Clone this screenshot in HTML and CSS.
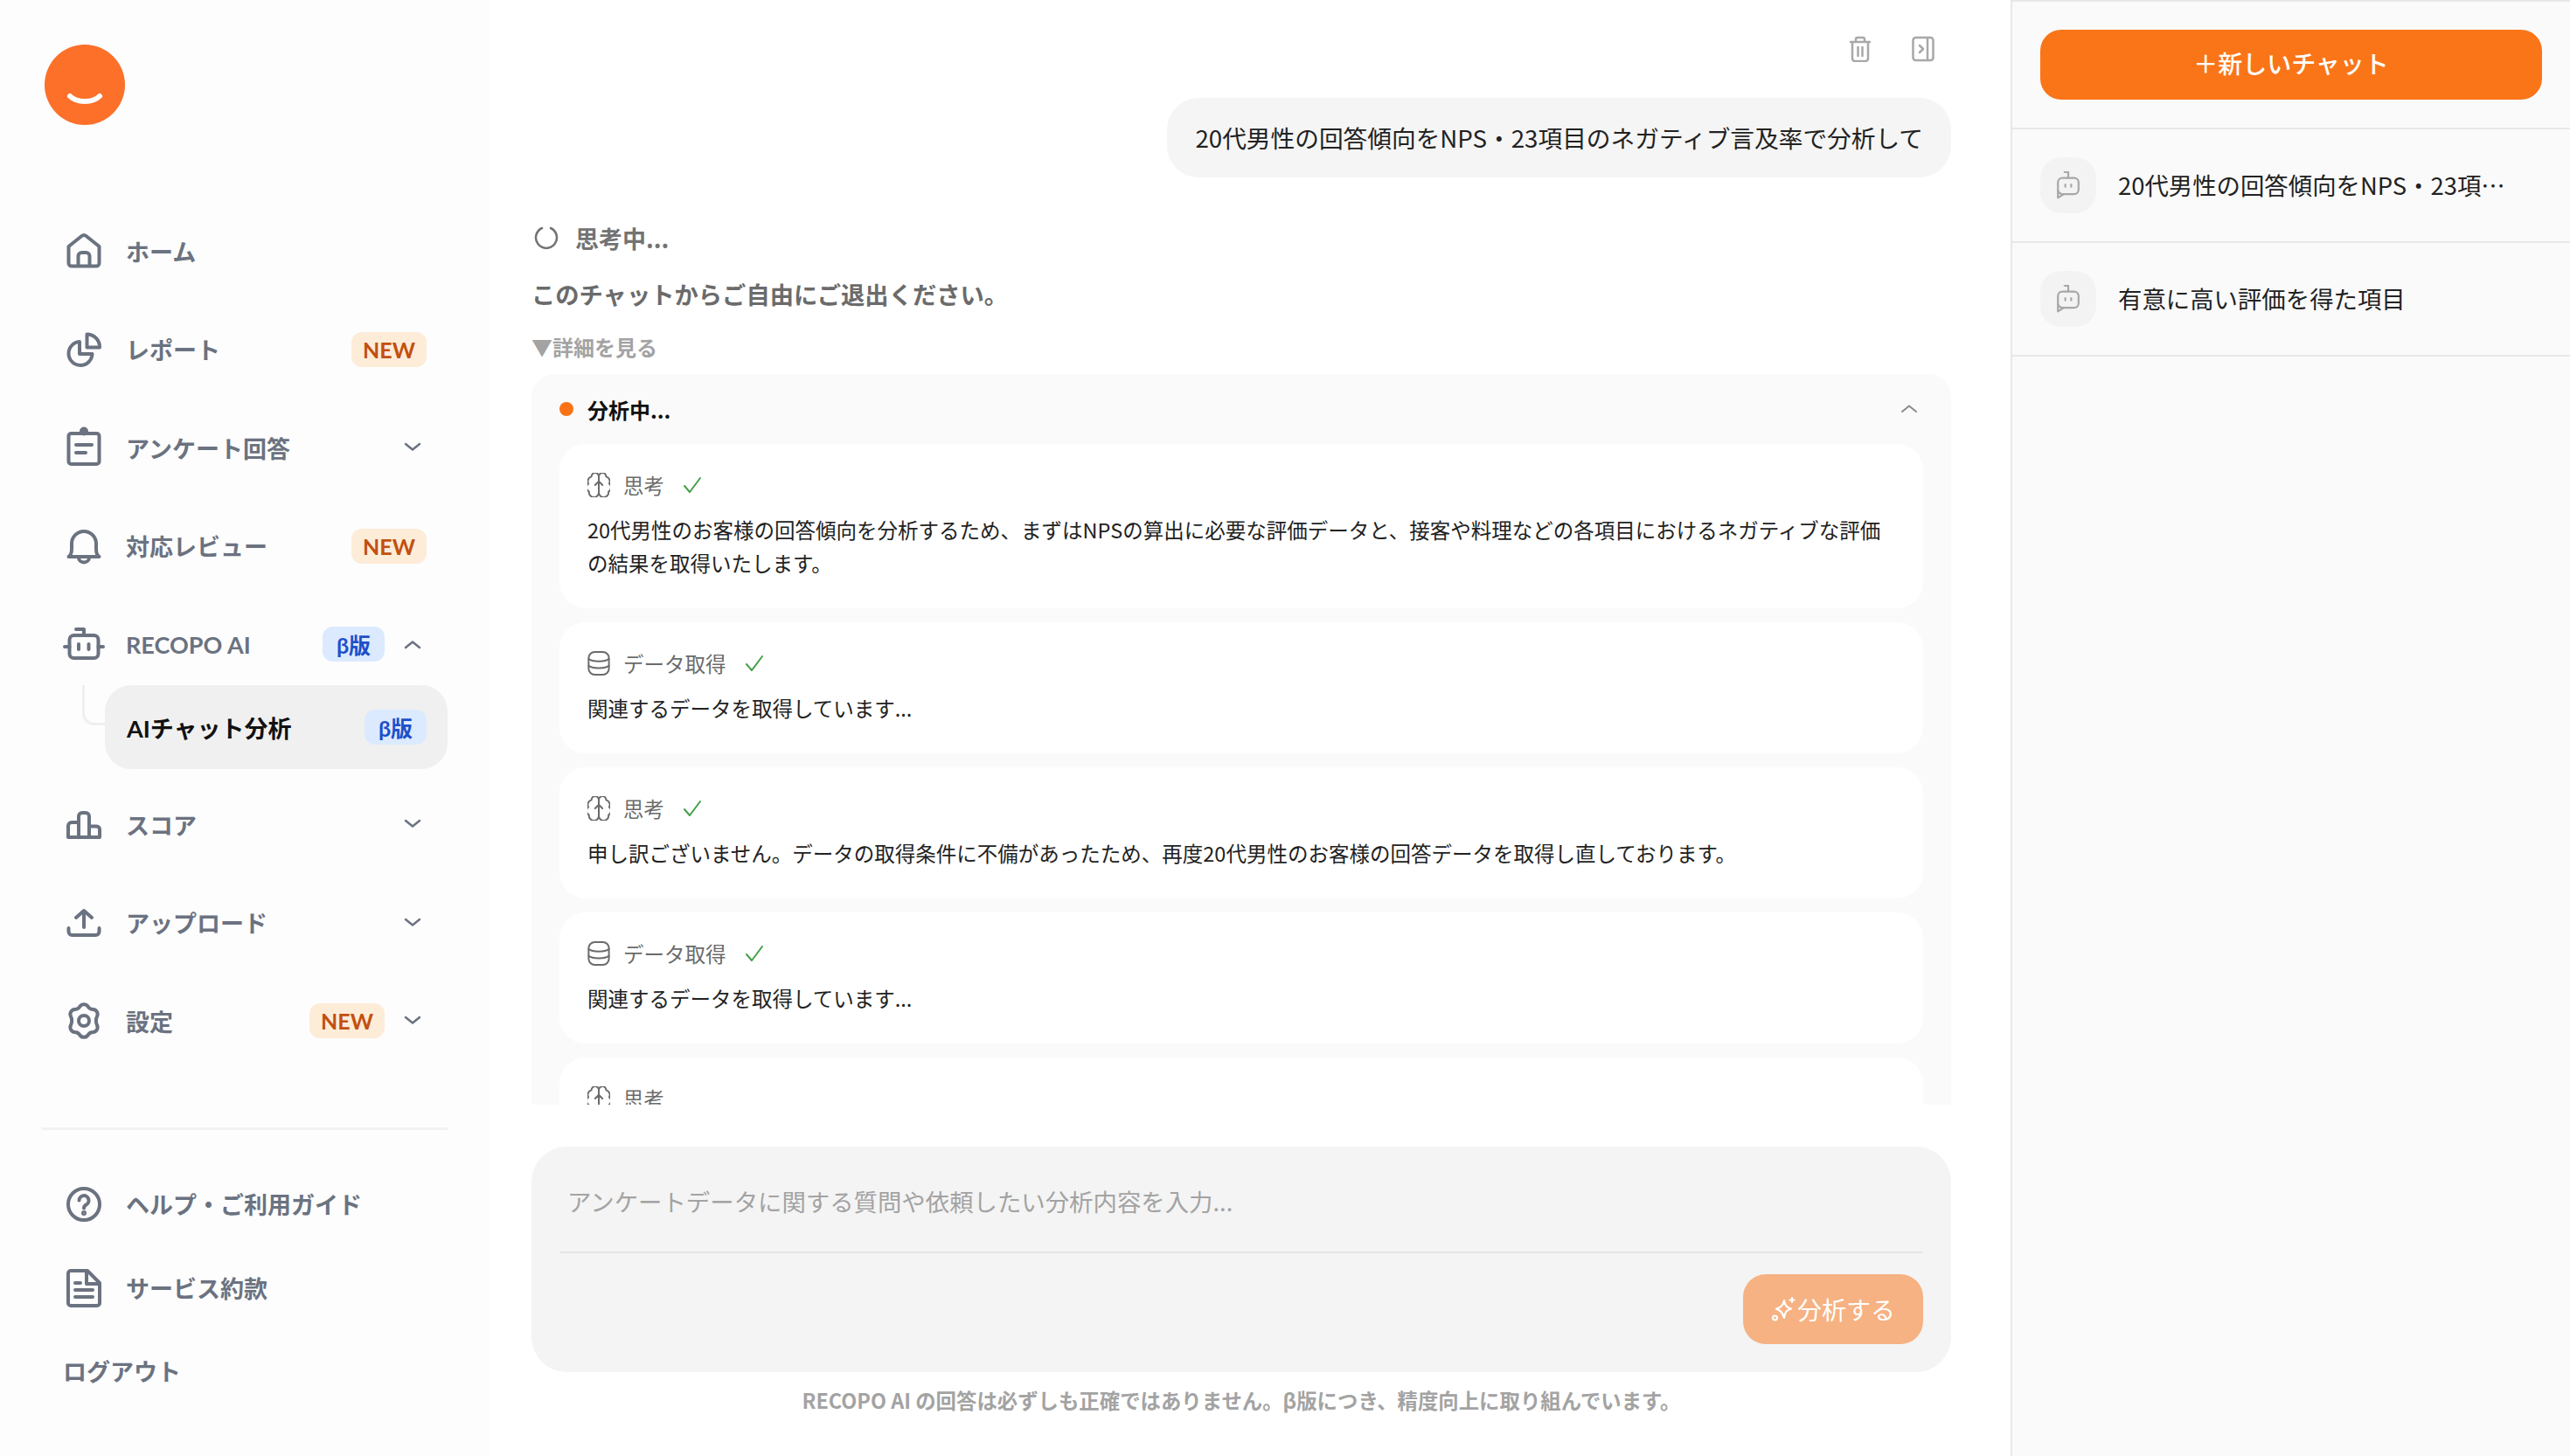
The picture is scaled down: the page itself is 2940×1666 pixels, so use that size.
FILE: index.html
```html
<!DOCTYPE html>
<html lang="ja">
<head>
	<meta charset="utf-8">
	<title>RECOPO AI</title>
	<link rel="stylesheet" href="styles.css">
</head>
<body>
<svg class="defs" width="0" height="0">
	<symbol id="brain" viewBox="3 2 18 20"><path d="M12 5a3 3 0 1 0-5.997.125 4 4 0 0 0-2.526 5.77 4 4 0 0 0 .556 6.588A4 4 0 1 0 12 18Z"/><path d="M12 5a3 3 0 1 1 5.997.125 4 4 0 0 1 2.526 5.77 4 4 0 0 1-.556 6.588A4 4 0 1 1 12 18Z"/><path d="M12 9v11M9 12l3-3 3 3"/></symbol>
	<symbol id="db" viewBox="3 2 18 20"><rect x="3.700" y="2.700" width="16.600" height="18.600" rx="5"/><path d="M3.700 8.500c3 2.500 13.600 2.500 16.600 0M3.700 14c3 2.500 13.600 2.500 16.600 0"/></symbol>
	<symbol id="check" viewBox="0 0 24 24"><path d="M3 13l6 7L21 4"/></symbol>
	<symbol id="chev" viewBox="0 0 20 20"><path d="M2 6l8 6.500 8-6.500"/></symbol>
	<symbol id="bot" viewBox="4 3 16 19"><path d="M12 7.500V3.500H9.500"/><rect x="5" y="7.500" width="14" height="11" rx="3"/><path d="M10 12v1.500M14 12v1.500M5 16v5l4-2.500"/></symbol>
</svg>

<div class="app">
	<aside class="side">
		<svg class="logo" viewBox="0 0 92 92"><circle cx="46" cy="46" r="46" fill="#fc7029"/><path d="M29 59c8 8 26 8 34 0" fill="none" stroke="#fff" stroke-width="6" stroke-linecap="round"/></svg>

		<nav class="nav">
			<a class="item">
				<svg class="ic" viewBox="0 0 40 40"><path d="M2.500 15L17.500 3q2.500-2 5 0l15 12v19a3.500 3.500 0 0 1-3.500 3.500H6A3.500 3.500 0 0 1 2.500 34zM13.500 37.500V26a4 4 0 0 1 4-4h5a4 4 0 0 1 4 4v11.500"/></svg>
				<span class="lbl">ホーム</span>
			</a>
			<a class="item">
				<svg class="ic" viewBox="0 0 40 40"><path d="M15 11a13.500 13.500 0 1 0 14.500 14H15z"/><path d="M23.500 2.500a14.500 14.500 0 0 1 14.500 15H23.500z"/></svg>
				<span class="lbl">レポート</span>
				<span class="tag new">NEW</span>
			</a>
			<a class="item">
				<svg class="ic" viewBox="0 0 40 40"><rect x="2.500" y="4" width="35" height="35" rx="3"/><path d="M11 17h18M11 26h11"/><circle cx="20" cy="1.500" r="3" fill="#6b7280"/></svg>
				<span class="lbl">アンケート回答</span>
				<svg class="chev"><use href="#chev"/></svg>
			</a>
			<a class="item">
				<svg class="ic" viewBox="0 0 40 40"><path d="M2.500 32c3-2 3.500-5 3.500-9v-6a14 14 0 0 1 28 0v6c0 4 .5 7 3.500 9zM14 33a6 5.500 0 0 0 12 0"/></svg>
				<span class="lbl">対応レビュー</span>
				<span class="tag new">NEW</span>
			</a>
			<a class="item">
				<svg class="ic" viewBox="0 0 40 40"><rect x="3.500" y="10" width="33" height="26" rx="5"/><path d="M20 10V3h-9M-2 23h5.500M36.500 23H42M14 20v6M25.500 20v6"/></svg>
				<span class="lbl">RECOPO AI</span>
				<span class="tag beta">β版</span>
				<svg class="chev up"><use href="#chev"/></svg>
			</a>
			<div class="sub-row">
				<span class="elbow"></span>
				<a class="sub">
					<span class="lbl">AIチャット分析</span>
					<span class="tag beta">β版</span>
				</a>
			</div>
			<a class="item">
				<svg class="ic" viewBox="0 0 40 40"><path d="M14 35V11a4 4 0 0 1 4-4h4a4 4 0 0 1 4 4v24M14 18H6a4 4 0 0 0-4 4v13h36v-9a3.500 3.500 0 0 0-3.500-3.500H26"/></svg>
				<span class="lbl">スコア</span>
				<svg class="chev"><use href="#chev"/></svg>
			</a>
			<a class="item">
				<svg class="ic" viewBox="0 0 40 40"><path d="M2.500 26v4a4 4 0 0 0 4 4h27a4 4 0 0 0 4-4v-4M20 25V7M11 14l9-8 9 8"/></svg>
				<span class="lbl">アップロード</span>
				<svg class="chev"><use href="#chev"/></svg>
			</a>
			<a class="item">
				<svg class="ic gear" viewBox="0 0 40 44"><path d="M15.500 5.500a5.500 5.500 0 0 1 9 0c1.500 2.500 3 3.500 6 3.500a5.500 5.500 0 0 1 4.500 8c-1.500 2.500-1.500 7.500 0 10a5.500 5.500 0 0 1-4.500 8c-3 0-4.500 1-6 3.500a5.500 5.500 0 0 1-9 0c-1.500-2.500-3-3.500-6-3.500a5.500 5.500 0 0 1-4.500-8c1.500-2.500 1.500-7.500 0-10a5.500 5.500 0 0 1 4.500-8c3 0 4.500-1 6-3.500z"/><circle cx="20" cy="22" r="6"/></svg>
				<span class="lbl">設定</span>
				<span class="tag new">NEW</span>
				<svg class="chev"><use href="#chev"/></svg>
			</a>
		</nav>

		<div class="rule"></div>

		<nav class="nav2">
			<a class="item">
				<svg class="ic" viewBox="0 0 40 40"><circle cx="20" cy="20" r="18"/><path d="M14.500 15.500a5.500 5.500 0 1 1 8 5c-1.500 1-2.500 2-2.500 4"/><circle cx="20" cy="30" r="1" fill="#6b7280"/></svg>
				<span class="lbl">ヘルプ・ご利用ガイド</span>
			</a>
			<a class="item">
				<svg class="ic" viewBox="0 0 40 40"><path d="M5 0h19l14 14v23a3 3 0 0 1-3 3H5a3 3 0 0 1-3-3V3a3 3 0 0 1 3-3zM23 0v15h15M10 14h6M10 22h20M10 30h20"/></svg>
				<span class="lbl">サービス約款</span>
			</a>
			<a class="logout">ログアウト</a>
		</nav>
	</aside>

	<main class="main">
		<div class="tools">
			<svg class="tool" viewBox="0 0 26 30"><path d="M2 7h22M8 7V4a2 2 0 0 1 2-2h6a2 2 0 0 1 2 2v3M4 7v19a3 3 0 0 0 3 3h12a3 3 0 0 0 3-3V7M10.500 13v10M15.500 13v10"/></svg>
			<svg class="tool" viewBox="0 0 26 30"><rect x="1.500" y="2" width="23" height="26" rx="3"/><path d="M18 2v26M9 11l4 4-4 4"/></svg>
		</div>
		<div class="bubble">20代男性の回答傾向をNPS・23項目のネガティブ言及率で分析して</div>

		<div class="thinking">
			<svg class="spin" viewBox="0 0 28 28"><path d="M9 3a12 12 0 1 0 10 0"/></svg>
			<span>思考中...</span>
		</div>
		<p class="leave">このチャットからご自由にご退出ください。</p>
		<p class="more">▼詳細を見る</p>

		<section class="log">
			<header class="log-head">
				<span class="dot"></span>
				<span class="log-title">分析中...</span>
				<svg class="log-chev"><use href="#chev"/></svg>
			</header>
			<div class="card">
				<div class="card-head"><svg class="card-ic"><use href="#brain"/></svg><span>思考</span><svg class="ok"><use href="#check"/></svg></div>
				<p>20代男性のお客様の回答傾向を分析するため、まずはNPSの算出に必要な評価データと、接客や料理などの各項目におけるネガティブな評価の結果を取得いたします。</p>
			</div>
			<div class="card">
				<div class="card-head"><svg class="card-ic"><use href="#db"/></svg><span>データ取得</span><svg class="ok"><use href="#check"/></svg></div>
				<p>関連するデータを取得しています...</p>
			</div>
			<div class="card">
				<div class="card-head"><svg class="card-ic"><use href="#brain"/></svg><span>思考</span><svg class="ok"><use href="#check"/></svg></div>
				<p>申し訳ございません。データの取得条件に不備があったため、再度20代男性のお客様の回答データを取得し直しております。</p>
			</div>
			<div class="card">
				<div class="card-head"><svg class="card-ic"><use href="#db"/></svg><span>データ取得</span><svg class="ok"><use href="#check"/></svg></div>
				<p>関連するデータを取得しています...</p>
			</div>
			<div class="card">
				<div class="card-head"><svg class="card-ic"><use href="#brain"/></svg><span>思考</span></div>
			</div>
		</section>

		<div class="composer">
			<div class="ph">アンケートデータに関する質問や依頼したい分析内容を入力...</div>
			<div class="composer-foot">
				<button class="send">
					<svg viewBox="0 0 30 30"><path d="M15 5c1 6 3 8 8 9.500-5 1.500-7 3.500-8 10.500-1-3-2-6-4-7.500-1-1-3-2-5-3 5-1.500 8-3.500 9-9.500z"/><path d="M24 2v5M21.500 4.500h5"/><circle cx="4.500" cy="25" r="2.500"/></svg>
					分析する
				</button>
			</div>
		</div>
		<p class="note">RECOPO AI の回答は必ずしも正確ではありません。β版につき、精度向上に取り組んでいます。</p>
	</main>

	<aside class="hist">
		<div class="hist-top"><button class="newchat">＋新しいチャット</button></div>
		<a class="hist-row">
			<span class="ava"><svg><use href="#bot"/></svg></span>
			<span class="hist-txt">20代男性の回答傾向をNPS・23項…</span>
		</a>
		<a class="hist-row">
			<span class="ava"><svg><use href="#bot"/></svg></span>
			<span class="hist-txt">有意に高い評価を得た項目</span>
		</a>
	</aside>
</div>
</body>
</html>
```

FILE: styles.css
```css
* {
	box-sizing: border-box;
}
html, body {
	margin: 0;
	height: 100%;
	background: #fff;
}
body {
	font-family: "Noto Sans CJK JP", "Noto Sans", sans-serif;
	color: #222;
}
p {
	margin: 0;
}
.defs {
	position: absolute;
}
.app {
	display: flex;
	width: 2940px;
	height: 1666px;
	overflow: hidden;
}

/* left menu */
.side {
	width: 560px;
	flex: none;
	background: #fdfdfd;
	padding: 51px 48px 0;
	font-family: "Lato", "Noto Sans CJK JP", sans-serif;
}
.logo {
	display: block;
	width: 92px;
	height: 92px;
	margin-left: 3px;
}
.nav {
	margin-top: 112px;
	display: flex;
	flex-direction: column;
}
.item {
	display: flex;
	align-items: center;
	height: 64px;
	padding: 0 30px 0 28px;
	margin-bottom: 48.5px;
	color: #6b7280;
}
.ic {
	width: 40px;
	height: 40px;
	flex: none;
	margin-right: 28px;
	overflow: visible;
	fill: none;
	stroke: #6b7280;
	stroke-width: 4;
	stroke-linejoin: round;
	stroke-linecap: round;
}
.gear {
	height: 44px;
}
.lbl {
	font-size: 27px;
	font-weight: 700;
	flex: 1;
	white-space: nowrap;
}
.chev {
	width: 20px;
	height: 20px;
	flex: none;
	fill: none;
	stroke: #6b7280;
	stroke-width: 2.5;
	stroke-linecap: round;
	stroke-linejoin: round;
}
.chev.up {
	transform: scaleY(-1);
}
.tag {
	flex: none;
	display: flex;
	align-items: center;
	justify-content: center;
	height: 40px;
	border-radius: 12px;
	font-size: 25px;
	font-weight: 700;
}
.new {
	width: 86px;
	background: #fdecd8;
	color: #c2500f;
}
.beta {
	width: 71px;
	background: #dbeafe;
	color: #1f4fc9;
}
.tag + .chev {
	margin-left: 22px;
}
.item > .tag:last-child {
	margin-right: -6px;
}
.sub-row {
	display: flex;
	margin-top: -33.5px;
	margin-bottom: 31px;
	height: 96px;
}
.elbow {
	width: 26px;
	height: 46px;
	margin-left: 46px;
	flex: none;
	border-left: 3px solid #efefef;
	border-bottom: 3px solid #efefef;
	border-bottom-left-radius: 14px;
}
.sub {
	flex: 1;
	display: flex;
	align-items: center;
	background: #f0f0f0;
	border-radius: 30px;
	padding: 0 24px 0 25px;
	color: #111;
}
.rule {
	height: 3px;
	background: #f2f2f2;
	margin-top: 41px;
}
.nav2 {
	margin-top: 53px;
}
.nav2 .item {
	margin-bottom: 32px;
}
.logout {
	display: block;
	margin-left: 24px;
	font-size: 27px;
	font-weight: 700;
	color: #6b7280;
	line-height: 64px;
}

/* chat column */
.main {
	width: 1740px;
	flex: none;
	padding: 0 68px 0 48px;
}
.tools {
	display: flex;
	justify-content: flex-end;
	gap: 46px;
	height: 112px;
	padding: 41px 19px 0 0;
}
.tool {
	width: 26px;
	height: 30px;
	fill: none;
	stroke: #a8a8a8;
	stroke-width: 2.5;
	stroke-linecap: round;
	stroke-linejoin: round;
}
.bubble {
	width: fit-content;
	margin-left: auto;
	height: 91px;
	line-height: 91px;
	padding: 0 32px;
	background: #f5f5f5;
	border-radius: 36px;
	font-size: 27.7px;
	color: #222;
}
.thinking {
	display: flex;
	align-items: center;
	gap: 19px;
	margin: 49px 0 0 3px;
	height: 40px;
	font-size: 27px;
	font-weight: 700;
	color: #737373;
}
.spin {
	width: 28px;
	height: 28px;
	fill: none;
	stroke: #737373;
	stroke-width: 2.5;
	stroke-linecap: round;
}
.leave {
	margin-top: 24px;
	line-height: 40px;
	font-size: 27.3px;
	font-weight: 700;
	color: #6b6b6b;
}
.more {
	margin-top: 23px;
	line-height: 36px;
	font-size: 24px;
	font-weight: 700;
	color: #a3a3a3;
}
.log {
	margin-top: 13px;
	height: 836px;
	overflow: hidden;
	background: #fafafa;
	border-radius: 26px 26px 0 0;
	padding: 0 32px;
}
.log-head {
	display: flex;
	align-items: center;
	height: 80px;
	padding-right: 8px;
}
.dot {
	width: 16px;
	height: 16px;
	border-radius: 50%;
	background: #f97316;
	margin-right: 16px;
}
.log-title {
	flex: 1;
	font-size: 24px;
	font-weight: 700;
	color: #111;
}
.log-chev {
	width: 20px;
	height: 20px;
	margin: -2px -2px 0 0;
	fill: none;
	stroke: #8a8a8a;
	stroke-width: 2;
	stroke-linecap: round;
	transform: scaleY(-1);
}
.card {
	background: #fff;
	border-radius: 30px;
	padding: 30px 32px 33px;
	margin-bottom: 16px;
}
.card p {
	margin-top: 15px;
	font-size: 23.5px;
	line-height: 38px;
	color: #222;
}
.card-head {
	display: flex;
	align-items: center;
	height: 34px;
	font-size: 23.5px;
	color: #6b6b6b;
}
.card-ic {
	width: 26px;
	height: 28px;
	margin-right: 15px;
	fill: none;
	stroke: #6b6b6b;
	stroke-width: 1.4;
	stroke-linecap: round;
	stroke-linejoin: round;
}
.ok {
	width: 24px;
	height: 24px;
	margin-left: 20px;
	fill: none;
	stroke: #43a047;
	stroke-width: 2;
	stroke-linecap: round;
	stroke-linejoin: round;
}

/* input */
.composer {
	margin-top: 48px;
	height: 258px;
	background: #f4f4f4;
	border-radius: 40px;
	padding: 0 32px;
}
.ph {
	height: 122px;
	padding: 42px 9px 0;
	font-size: 27.4px;
	line-height: 40px;
	color: #a3a3a3;
	border-bottom: 2px solid #e5e5e5;
}
.composer-foot {
	display: flex;
	justify-content: flex-end;
	padding-top: 24px;
}
.send {
	display: flex;
	align-items: center;
	justify-content: center;
	width: 206px;
	height: 80px;
	border: 0;
	border-radius: 26px;
	background: #f6b283;
	color: #fff;
	font-family: inherit;
	font-size: 28px;
}
.send svg {
	width: 30px;
	height: 30px;
	fill: none;
	stroke: #fff;
	stroke-width: 2.2;
	stroke-linecap: round;
	stroke-linejoin: round;
}
.note {
	margin-top: 15px;
	text-align: center;
	font-size: 23.4px;
	line-height: 34px;
	font-weight: 700;
	color: #a3a3a3;
}

/* history */
.hist {
	flex: 1;
	background: #fafafa;
	border-left: 2px solid #e8e8e8;
	border-top: 2px solid #e8e8e8;
}
.hist-top {
	height: 146px;
	padding: 32px 32px 0;
	border-bottom: 2px solid #e8e8e8;
}
.newchat {
	display: block;
	width: 100%;
	height: 80px;
	padding: 0 0 4px;
	border: 0;
	border-radius: 24px;
	background: #fa7518;
	color: #fff;
	font-family: inherit;
	font-size: 28px;
	font-weight: 500;
}
.hist-row {
	display: flex;
	align-items: center;
	gap: 25px;
	height: 130px;
	padding: 0 32px;
	border-bottom: 2px solid #e8e8e8;
}
.ava {
	width: 64px;
	height: 64px;
	flex: none;
	display: flex;
	align-items: center;
	justify-content: center;
	background: #f3f3f3;
	border-radius: 24px;
}
.ava svg {
	width: 30px;
	height: 32px;
	fill: none;
	stroke: #a8a8a8;
	stroke-width: 1.3;
	stroke-linecap: round;
	stroke-linejoin: round;
}
.hist-txt {
	font-size: 27.4px;
	color: #222;
	white-space: nowrap;
	padding-bottom: 3px;
}
```
